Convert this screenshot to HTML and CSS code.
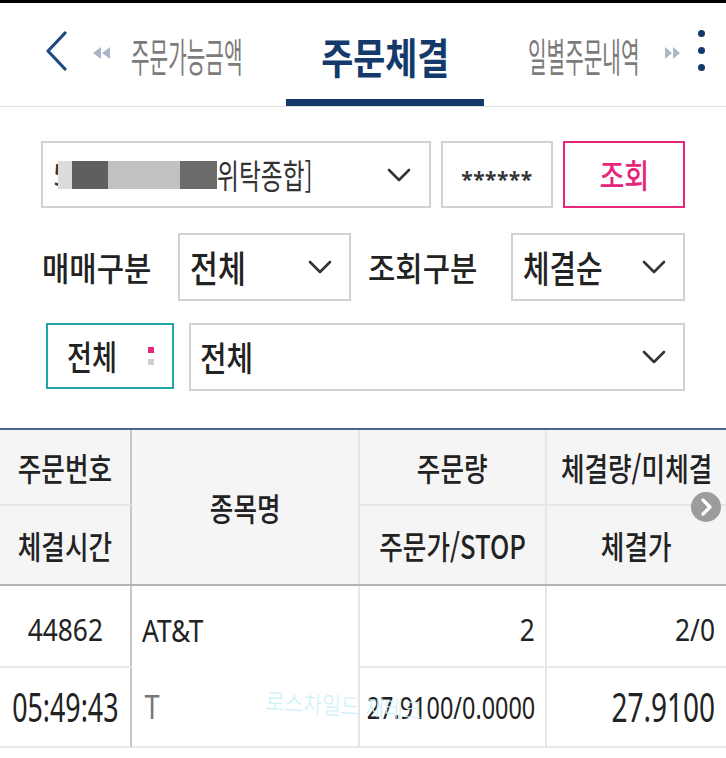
FILE: index.html
```html
<!DOCTYPE html>
<html lang="ko">
<head>
<meta charset="utf-8">
<title>주문체결</title>
<link rel="stylesheet" href="styles.css">
</head>
<body>
<div class="status"></div>
<nav class="tabbar">
  <span class="back"><svg width="24" height="40" viewBox="0 0 24 40"><polyline points="20,2 3,20 20,38" fill="none" stroke="#1d4a80" stroke-width="3.2" stroke-linecap="round" stroke-linejoin="round"/></svg></span>
  <span class="prev"><svg width="17" height="12" viewBox="0 0 17 12"><polygon points="8,0 0,6 8,12" fill="#a9b7c9"/><polygon points="17,0 9,6 17,12" fill="#a9b7c9"/></svg></span>
  <span class="tab tab-left"><span class="sx l tabtxt">주문가능금액</span></span>
  <span class="tab active"><span class="sx c acttxt">주문체결</span></span>
  <span class="tab tab-right"><span class="sx l tabtxt">일별주문내역</span></span>
  <span class="next"><svg width="15" height="12" viewBox="0 0 15 12"><polygon points="0,0 7,6 0,12" fill="#a9b7c9"/><polygon points="8,0 15,6 8,12" fill="#a9b7c9"/></svg></span>
  <span class="dots"><i></i><i></i><i></i></span>
</nav>

<div class="row row1">
  <div class="box acct">
    <span class="five">5</span>
    <span class="mask"><i class="m1"></i><i class="m2"></i><i class="m3"></i><i class="m4"></i></span>
    <span class="acct-txt"><span class="sx l accttxt">위탁종합]</span></span>
    <svg class="chev" width="24" height="14" viewBox="0 0 24 14"><polyline points="2,2 12,12 22,2" fill="none" stroke="#333" stroke-width="2.6" stroke-linecap="round" stroke-linejoin="round"/></svg>
  </div>
  <div class="box pw">******</div>
  <div class="box btn"><span class="sx c btntxt">조회</span></div>
</div>

<div class="row row2">
  <span class="label"><span class="sx l lbltxt">매매구분</span></span>
  <div class="box sel sel1">
    <span class="seltxt-wrap"><span class="sx l seltxt">전체</span></span>
    <svg class="chev" width="24" height="14" viewBox="0 0 24 14"><polyline points="2,2 12,12 22,2" fill="none" stroke="#333" stroke-width="2.6" stroke-linecap="round" stroke-linejoin="round"/></svg>
  </div>
  <span class="label label2"><span class="sx l lbltxt">조회구분</span></span>
  <div class="box sel sel2">
    <span class="seltxt-wrap"><span class="sx l seltxt2">체결순</span></span>
    <svg class="chev" width="24" height="14" viewBox="0 0 24 14"><polyline points="2,2 12,12 22,2" fill="none" stroke="#333" stroke-width="2.6" stroke-linecap="round" stroke-linejoin="round"/></svg>
  </div>
</div>

<div class="row row3">
  <div class="box teal">
    <span class="teal-txt"><span class="sx l tealtxt">전체</span></span>
    <span class="mini"><i class="pink"></i><i class="gray"></i></span>
  </div>
  <div class="box sel sel3">
    <span class="seltxt-wrap"><span class="sx l bigtxt">전체</span></span>
    <svg class="chev" width="24" height="14" viewBox="0 0 24 14"><polyline points="2,2 12,12 22,2" fill="none" stroke="#333" stroke-width="2.6" stroke-linecap="round" stroke-linejoin="round"/></svg>
  </div>
</div>

<section class="table">
  <div class="thead">
    <div class="cell k1 t1 bb"><span class="sx c hdtxt">주문번호</span></div>
    <div class="cell k2 span2"><span class="sx c hdtxt">종목명</span></div>
    <div class="cell k3 t1 bb"><span class="sx c hdtxt">주문량</span></div>
    <div class="cell k4 t1 bb"><span class="sx c hdtxt">체결량/미체결</span></div>
    <div class="cell k1"><span class="sx c hdtxt">체결시간</span></div>
    <div class="cell k3"><span class="sx c hdtxt">주문가/STOP</span></div>
    <div class="cell k4"><span class="sx c hdtxt">체결가</span></div>
    <span class="more"><svg width="30" height="30" viewBox="0 0 30 30"><circle cx="15" cy="15" r="15" fill="#9c9c9c"/><polyline points="12,8 19,15 12,22" fill="none" stroke="#fff" stroke-width="3.2" stroke-linecap="round" stroke-linejoin="round"/></svg></span>
  </div>
  <div class="tbody">
    <div class="cell k1 bb"><span class="sx c n1">44862</span></div>
    <div class="cell k2 left"><span class="sx l n1">AT&amp;T</span></div>
    <div class="cell k3 bb right"><span class="sx r n1">2</span></div>
    <div class="cell k4 bb right"><span class="sx r n1">2/0</span></div>
    <div class="cell k1 bb"><span class="sx c time">05:49:43</span></div>
    <div class="cell k2 bb left"><span class="sx l sym">T</span></div>
    <div class="cell k3 bb right"><span class="sx r price">27.9100/0.0000</span></div>
    <div class="cell k4 bb right"><span class="sx r exec">27.9100</span></div>
    <span class="wm">로스차일드 재테크</span>
  </div>
</section>
</body>
</html>
```

FILE: styles.css
```css
* { box-sizing: border-box; }
html, body { margin: 0; padding: 0; background: #fff; }
body {
  width: 726px;
  height: 758px;
  overflow: hidden;
  font-family: "Noto Sans", "Noto Sans CJK KR", sans-serif;
  color: #222;
}
.sx { display: inline-block; white-space: nowrap; flex-shrink: 0; line-height: 1; }
.l { transform-origin: left center; }
.c { transform-origin: center center; }
.r { transform-origin: right center; }

.status { height: 3px; background: #000; }

/* tab bar */
.tabbar {
  display: flex;
  align-items: center;
  height: 104px;
  border-bottom: 1px solid #e2e2e2;
}
.back { margin-left: 45px; display: flex; margin-bottom: 7px; }
.prev { margin-left: 24px; display: flex; margin-bottom: 4px; }
.tab { display: flex; align-items: center; height: 100%; }
.tab-left { margin-left: 21px; width: 112px; }
.tab-right { margin-left: 44px; width: 108px; }
.tabtxt { font-family: "Noto Sans CJK KR", sans-serif; font-size: 40px; font-weight: 400; color: #7b7b7b; transform: scaleX(.505); }
.active {
  margin-left: 43px;
  width: 198px;
  justify-content: center;
  border-bottom: 7px solid #143a6c;
  padding-top: 10px;
  align-self: stretch;
}
.acttxt { font-family: "Noto Sans CJK KR", sans-serif; font-size: 42px; font-weight: 700; color: #143a6c; transform: scaleX(.83); }
.next { margin-left: 29px; display: flex; margin-bottom: 4px; }
.dots { margin-left: 18px; display: flex; flex-direction: column; gap: 10px; margin-bottom: 9px; }
.dots i { display: block; width: 7px; height: 7px; border-radius: 50%; background: #143a6c; }

/* form rows */
.row { display: flex; align-items: center; }
.box { border: 2px solid #d2d2d2; display: flex; align-items: center; background: #fff; }
.row1 { margin-top: 34px; padding-left: 41px; gap: 10px; height: 67px; }
.acct { width: 390px; height: 67px; padding-left: 10px; }
.five { font-size: 30px; color: #333; line-height: 1; }
.mask { display: flex; height: 28px; margin-left: -12px; }
.mask i { display: block; height: 28px; }
.m1 { width: 14px; background: #dcdcdc; }
.m2 { width: 36px; background: #5f5f5f; }
.m3 { width: 72px; background: #c1c1c1; }
.m4 { width: 37px; background: #6b6b6b; }
.acct-txt { flex: 1; display: flex; min-width: 0; }
.accttxt { font-family: "Noto Sans CJK KR", sans-serif; font-size: 34px; color: #333; transform: scaleX(.7); }
.chev { flex-shrink: 0; }
.acct .chev { margin-right: 18px; }
.pw {
  width: 112px; height: 67px; justify-content: center;
  font-size: 21px; font-weight: 700; color: #333; letter-spacing: 0.5px; padding-top: 8px;
}
.btn { width: 122px; height: 67px; border-color: #e5267a; justify-content: center; }
.btntxt { font-family: "Noto Sans CJK KR", sans-serif; font-size: 33px; font-weight: 500; color: #e5267a; transform: scaleX(.82); }

.row2 { margin-top: 25px; padding-left: 42px; height: 68px; }
.label { width: 108px; display: flex; }
.label2 { margin-left: 17px; }
.lbltxt { font-family: "Noto Sans CJK KR", sans-serif; font-size: 33px; font-weight: 500; color: #222; transform: scaleX(.9); }
.sel { height: 68px; padding-left: 10px; }
.sel1 { width: 173px; margin-left: 28px; }
.sel2 { width: 174px; margin-left: 35px; }
.seltxt-wrap { flex: 1; display: flex; min-width: 0; }
.sel .chev { margin-right: 17px; }
.seltxt { font-family: "Noto Sans CJK KR", sans-serif; font-size: 37px; font-weight: 500; color: #222; transform: scaleX(.82); }
.seltxt2 { font-family: "Noto Sans CJK KR", sans-serif; font-size: 37px; font-weight: 500; color: #222; transform: scaleX(.78); }

.row3 { margin-top: 22px; padding-left: 46px; height: 68px; align-items: flex-start; }
.teal { width: 128px; height: 66px; border-color: #22a4a8; padding-left: 19px; }
.teal-txt { width: 51px; display: flex; }
.tealtxt { font-family: "Noto Sans CJK KR", sans-serif; font-size: 34px; font-weight: 500; color: #222; transform: scaleX(.8); }
.mini { margin-left: 30px; display: flex; flex-direction: column; gap: 6px; }
.mini i { display: block; width: 6px; height: 6px; }
.mini .pink { background: #e5267a; }
.mini .gray { background: #cfcfcf; }
.sel3 { width: 496px; margin-left: 15px; padding-left: 9px; }
.bigtxt { font-family: "Noto Sans CJK KR", sans-serif; font-size: 34px; font-weight: 500; color: #222; transform: scaleX(.85); }

/* table */
.table { margin-top: 37px; position: relative; }
.thead, .tbody {
  display: grid;
  grid-template-columns: 132px 228px 187px 179px;
}
.thead {
  position: relative;
  grid-template-rows: 76px 78px;
  background: #f5f5f5;
  border-top: 2px solid #4d6690;
  border-bottom: 2px solid #b3b3b3;
}
.tbody { position: relative; grid-template-rows: 82px 80px; }
.cell { display: flex; align-items: center; justify-content: center; }
.k1 { border-right: 2px solid #c6c6c6; grid-column: 1; }
.k2 { border-right: 2px solid #e6e6e6; grid-column: 2; }
.k3 { border-right: 2px solid #e6e6e6; grid-column: 3; }
.k4 { grid-column: 4; }
.bb { border-bottom: 2px solid #e9e9e9; }
.thead .bb { border-bottom-color: #e6e6e6; }
.span2 { grid-row: 1 / span 2; }
.hdtxt { font-family: "Noto Sans CJK KR", sans-serif; font-size: 32px; font-weight: 500; color: #222; transform: scaleX(.8); }
.more { position: absolute; left: 691px; top: 62px; display: flex; }

.left { justify-content: flex-start; padding-left: 10px; }
.right { justify-content: flex-end; padding-right: 10px; }
.n1 { font-size: 31px; color: #222; transform: scaleX(.85); padding-top: 6px; }
.time { font-size: 40px; color: #222; transform: scaleX(.67); }
.sym { font-size: 32px; color: #777; transform: scaleX(.85); padding-left: 3px; }
.price { font-size: 31px; color: #222; transform: scaleX(.755); }
.exec { font-size: 40px; color: #222; transform: scaleX(.7); }
.tbody .k4.right { padding-right: 11px; }

.wm {
  position: absolute;
  left: 266px;
  top: 96px;
  font-family: "Noto Sans CJK KR", sans-serif;
  font-size: 24px;
  font-weight: 300;
  color: #c7eff7;
  white-space: nowrap;
  transform: scaleX(.85) rotate(3deg);
  transform-origin: left center;
  pointer-events: none;
}
```
